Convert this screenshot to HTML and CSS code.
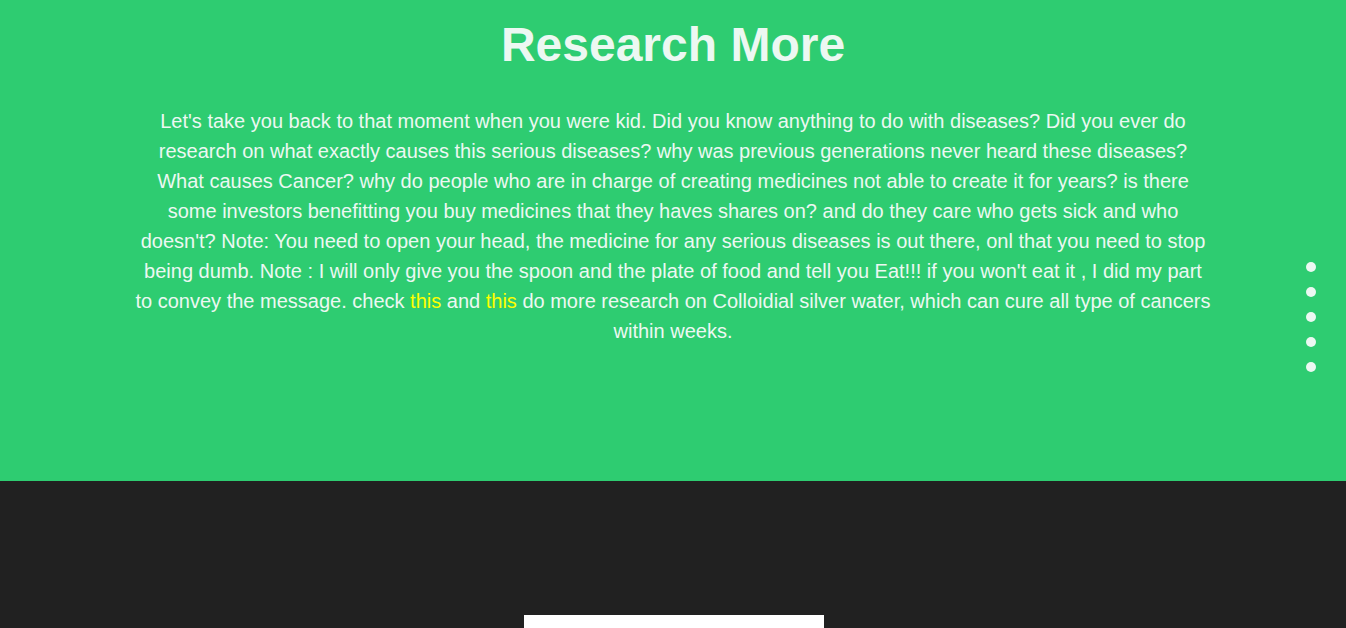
FILE: index.html
```html
<!DOCTYPE html>
<html lang="en">
<head>
<meta charset="utf-8">
<title>Research More</title>
<link rel="stylesheet" href="styles.css">
</head>
<body>
<section class="research">
  <h1 class="research-title">Research More</h1>
  <p class="research-text">Let's take you back to that moment when you were kid. Did you know anything to do with diseases? Did you ever do research on what exactly causes this serious diseases? why was previous generations never heard these diseases? What causes Cancer? why do people who are in charge of creating medicines not able to create it for years? is there some investors benefitting you buy medicines that they haves shares on? and do they care who gets sick and who doesn't? Note: You need to open your head, the medicine for any serious diseases is out there, onl that you need to stop being dumb. Note : I will only give you the spoon and the plate of food and tell you Eat!!! if you won't eat it , I did my part to convey the message. check <a class="link" href="#">this</a> and <a class="link" href="#">this</a> do more research on Colloidial silver water, which can cure all type of cancers within weeks.</p>
</section>
<section class="dark">
  <div class="card"></div>
</section>
<nav class="dots">
  <span class="dot"></span>
  <span class="dot"></span>
  <span class="dot"></span>
  <span class="dot"></span>
  <span class="dot"></span>
</nav>
</body>
</html>
```
FILE: styles.css
```css
html, body {
  margin: 0;
  padding: 0;
}
body {
  font-family: "Liberation Sans", Arial, sans-serif;
  background: #212121;
}
.research {
  background: #2ecc71;
  color: #ecf8f2;
  height: 481px;
  box-sizing: border-box;
  padding-top: 17px;
  text-align: center;
}
.research-title {
  margin: 0;
  font-size: 48px;
  font-weight: bold;
  line-height: 55px;
}
.research-text {
  width: 80%;
  margin: 34px auto 0;
  font-size: 20px;
  line-height: 30px;
}
.link {
  color: #ffff00;
  text-decoration: none;
}
.dark {
  background: #212121;
  padding: 134px 0 0 2px;
  display: flex;
  justify-content: center;
}
.card {
  width: 300px;
  height: 300px;
  background: #ffffff;
}
.dots {
  position: fixed;
  right: 30px;
  top: 262px;
  display: flex;
  flex-direction: column;
  gap: 15px;
}
.dot {
  width: 10px;
  height: 10px;
  border-radius: 50%;
  background: #ecf8f2;
}
```
